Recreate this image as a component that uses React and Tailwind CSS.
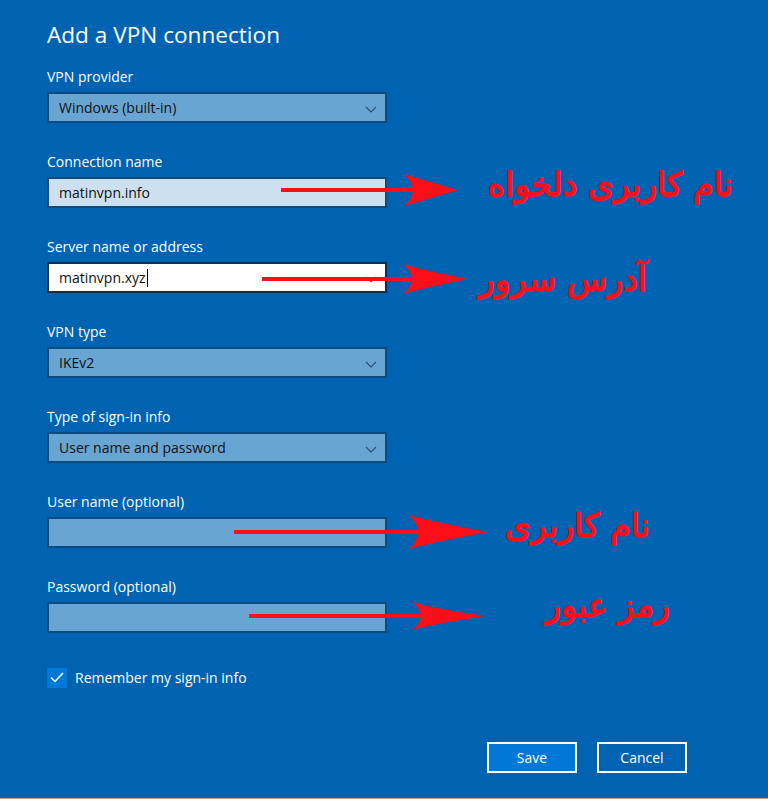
import React from 'react';

const font = { fontFamily: '"Open Sans", "Noto Sans", sans-serif' };

// Little chevron used on the combo boxes
const Chevron = ({ light }) => (
  <svg width="12" height="7" viewBox="0 0 12 7" className="absolute right-[8px] top-[12px]">
    <path d="M1 1 L6 6 L11 1" fill="none" stroke={light ? '#6b6b6b' : '#2c4f73'} strokeWidth="1.2" />
  </svg>
);

const Field = ({ value, variant = 'blue', chevron, caret }) => {
  const styles = {
    blue: 'bg-[#69a5d3] border-[#0d4b7e]',
    pale: 'bg-[#cce0f0] border-[#0d4b7e]',
    white: 'bg-white border-[#0a2f50]',
  };
  return (
    <div className={`relative w-[340px] h-[31px] border-2 ${styles[variant]} flex items-center pl-[10px]`}>
      <span className="text-[14px] text-[#111] leading-none">{value}</span>
      {caret && <span className="inline-block w-px h-[18px] bg-black ml-px" />}
      {chevron && <Chevron light={variant === 'white'} />}
    </div>
  );
};

const Group = ({ label, children, className = '' }) => (
  <div className={className}>
    <div className="h-[20px] leading-[20px] text-[14px] text-white mb-[5px]">{label}</div>
    {children}
  </div>
);

// Red hand-drawn arrow annotation
const Arrow = ({ x1, x2, y, back, half }) => (
  <g fill="#ff0d18">
    <rect x={x1} y={y - 2} width={x2 - x1 - 10} height="4" />
    <path d={`M${x2} ${y} Q${back + 20} ${y - half + 6} ${back} ${y - half} Q${back + 18} ${y} ${back} ${y + half} Q${back + 20} ${y + half - 6} ${x2} ${y} Z`} />
  </g>
);

const notes = [
  { text: 'نام کاربری دلخواه', right: 35, top: 165 },
  { text: 'آدرس سرور', right: 121, top: 260 },
  { text: 'نام کاربری', right: 118, top: 506 },
  { text: 'رمز عبور', right: 98, top: 586 },
];

export default function App() {
  return (
    <div className="relative w-[768px] h-[799px] bg-[#0063b1] border-b border-[#a0a0a0] overflow-hidden" style={font}>
      <div className="pl-[47px] pt-[20px]">
        <h1 className="text-[22.6px] leading-[30px] text-white mb-[17px]">Add a VPN connection</h1>

        <Group label="VPN provider">
          <Field value="Windows (built-in)" chevron />
        </Group>
        <Group label="Connection name" className="mt-[29px]">
          <Field value="matinvpn.info" variant="pale" />
        </Group>
        <Group label="Server name or address" className="mt-[29px]">
          <Field value="matinvpn.xyz" variant="white" chevron caret />
        </Group>
        <Group label="VPN type" className="mt-[29px]">
          <Field value="IKEv2" chevron />
        </Group>
        <Group label="Type of sign-in info" className="mt-[29px]">
          <Field value="User name and password" chevron />
        </Group>
        <Group label="User name (optional)" className="mt-[29px]">
          <Field value="" />
        </Group>
        <Group label="Password (optional)" className="mt-[29px]">
          <Field value="" />
        </Group>

        <label className="flex items-center gap-[8px] mt-[34px]">
          <span className="w-[20px] h-[20px] bg-[#0078d7] flex items-center justify-center">
            <svg width="14" height="11" viewBox="0 0 14 11">
              <path d="M1 5.5 L5 9.5 L13 1" fill="none" stroke="white" strokeWidth="1.5" />
            </svg>
          </span>
          <span className="text-[14px] text-white">Remember my sign-in info</span>
        </label>

        <div className="flex justify-end gap-[20px] pr-[81px] mt-[54px]">
          <button className="w-[90px] h-[31px] border-2 border-white bg-[#0078d7] text-white text-[14px]">Save</button>
          <button className="w-[90px] h-[31px] border-2 border-white text-white text-[14px]">Cancel</button>
        </div>
      </div>

      {/* annotations drawn over the form */}
      <svg className="absolute inset-0 pointer-events-none" width="768" height="799">
        <Arrow x1={281} x2={458} y={190} back={404} half={16} />
        <Arrow x1={262} x2={468} y={279} back={403} half={15} />
        <Arrow x1={234} x2={488} y={532} back={409} half={17} />
        <Arrow x1={249} x2={485} y={616} back={412} half={14} />
      </svg>
      {notes.map((n) => (
        <div
          key={n.text}
          dir="rtl"
          className="absolute text-[#ff0d18] font-normal text-[33px] leading-[40px] whitespace-nowrap [-webkit-text-stroke:1.4px_#ff0d18]"
          style={{ right: n.right, top: n.top, fontFamily: '"DejaVu Sans", sans-serif' }}
        >
          {n.text}
        </div>
      ))}
    </div>
  );
}
